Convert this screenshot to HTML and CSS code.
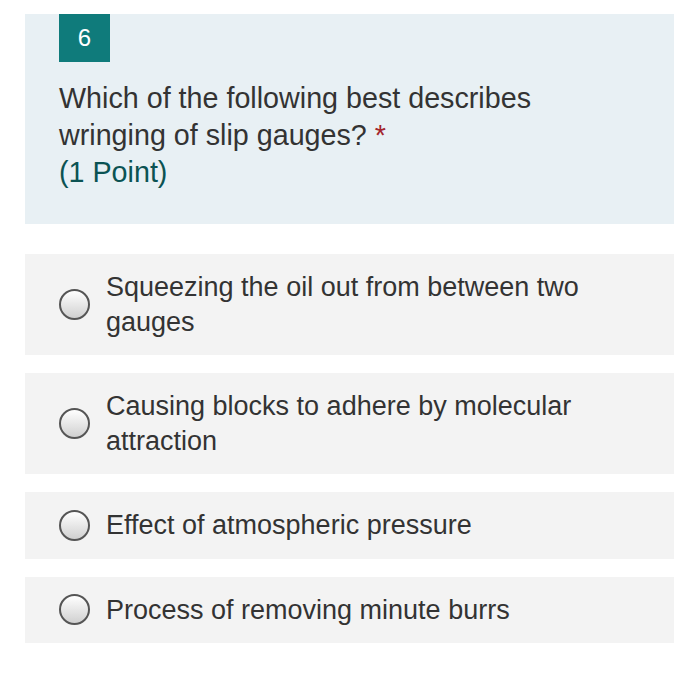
FILE: index.html
```html
<!DOCTYPE html>
<html>
<head>
<meta charset="utf-8">
<link rel="stylesheet" href="styles.css">
</head>
<body>
<div class="page">
  <div class="question">
    <div class="badge">6</div>
    <div class="title">Which of the following best describes wringing of slip gauges? <span class="req">*</span><br><span class="points">(1 Point)</span></div>
  </div>
  <div class="options">
    <div class="option"><span class="radio"></span><span class="label">Squeezing the oil out from between two gauges</span></div>
    <div class="option"><span class="radio"></span><span class="label">Causing blocks to adhere by molecular attraction</span></div>
    <div class="option"><span class="radio"></span><span class="label">Effect of atmospheric pressure</span></div>
    <div class="option"><span class="radio"></span><span class="label">Process of removing minute burrs</span></div>
  </div>
</div>
</body>
</html>
```
FILE: styles.css
```css
html, body {
  margin: 0;
  padding: 0;
  background: #ffffff;
}
.page {
  font-family: "Liberation Sans", Arial, sans-serif;
  color: #333333;
  padding: 14px 26px 0 25px;
}
.question {
  background: #e8f0f4;
  padding: 0 40px 33px 34px;
}
.badge {
  display: inline-block;
  vertical-align: top;
  background: #0f7b7b;
  color: #ffffff;
  width: 51px;
  height: 48px;
  line-height: 48px;
  text-align: center;
  font-size: 24px;
}
.title {
  margin-top: 18px;
  font-size: 28.7px;
  line-height: 37px;
  max-width: 520px;
}
.req {
  color: #a4262c;
}
.points {
  color: #0b5353;
}
.options {
  display: flex;
  flex-direction: column;
  gap: 18px;
  margin-top: 30px;
}
.option {
  background: #f3f3f3;
  display: flex;
  align-items: center;
  padding: 16px 40px 16px 34px;
}
.radio {
  flex: none;
  width: 27px;
  height: 27px;
  border: 2px solid #555555;
  border-radius: 50%;
  background: linear-gradient(#ffffff, #d0d0d0);
  margin-right: 16px;
}
.label {
  font-size: 27px;
  line-height: 34.5px;
  max-width: 520px;
}
```
